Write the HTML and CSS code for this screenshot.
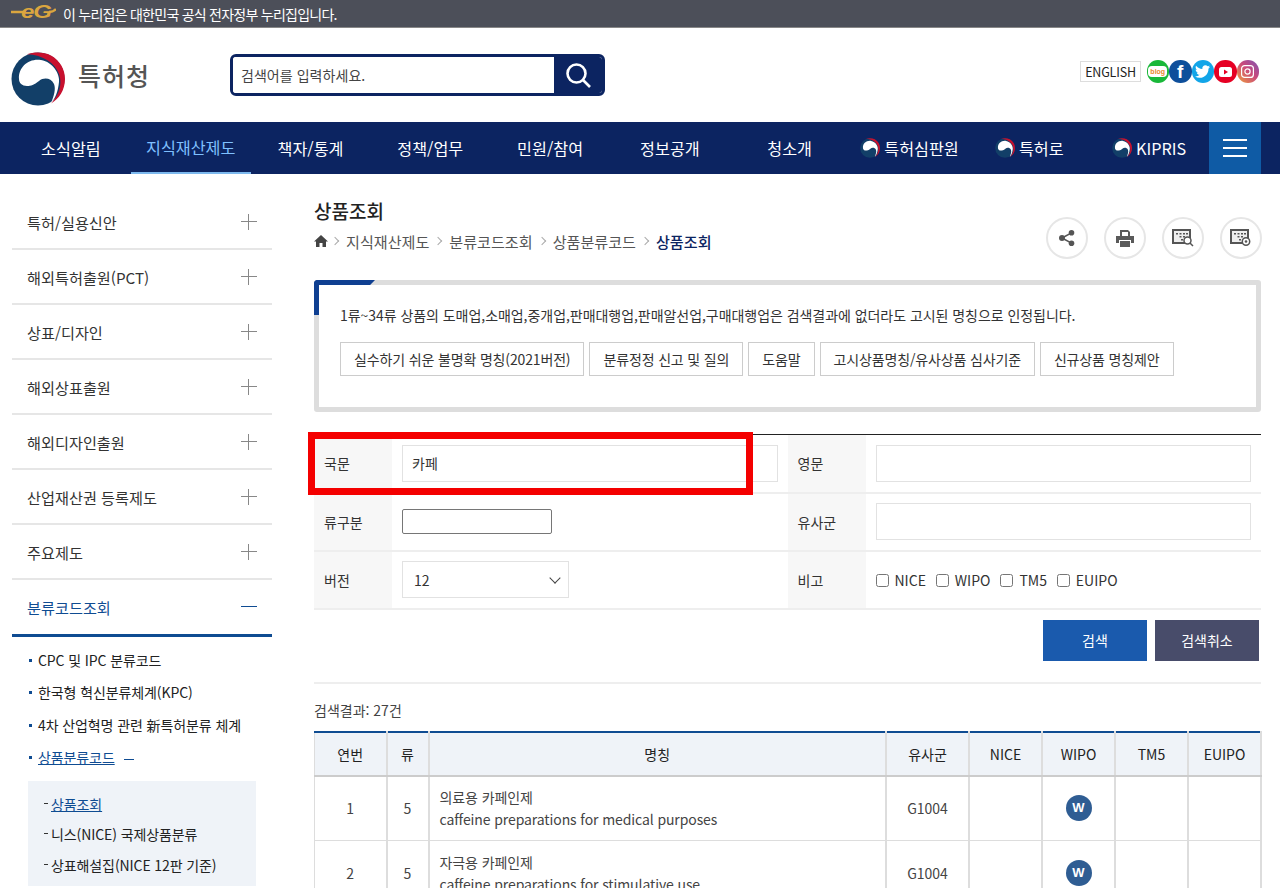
FILE: index.html
```html
<!DOCTYPE html>
<html lang="ko">

<head>
  <meta charset="utf-8">
  <title>상품조회 - 특허청</title>
  <link rel="stylesheet" href="styles.css">
</head>

<body>
  <svg class="defs" width="0" height="0">
    <symbol id="taegeuk" viewBox="0 0 54 54">
      <circle cx="27" cy="27" r="26.500" fill="#123f68" />
      <path fill="#c8102e" d="M16 2.300C23 0 32-.5 40 3.500c9 5 14 14 14 23.500 0 11-6 20-14 24.500 7-7 12-18 8-29.500C44 11 32 3 16 2.300z" />
      <path fill="#fff" d="M8 27C7 15 18 6 30 8c12 2 19 14 18 22-1 10-4 17-8 21 3-7 5-14 3-19-3-6-10-7-15-3-5 4-8 5-12 5-5 0-8-3-8-7z" />
    </symbol>
  </svg>

  <div class="gov-bar">
    <svg class="eg-logo" width="45" height="26" viewBox="0 0 45 26">
      <path d="M0 11h14M38 11c3 0 5-.5 7-3" fill="none" stroke="#dba63f" stroke-width="2.500" />
      <text x="10" y="17" textLength="30" lengthAdjust="spacingAndGlyphs" class="eg-text">eG</text>
    </svg>
    <span>이 누리집은 대한민국 공식 전자정부 누리집입니다.</span>
  </div>

  <header class="site-header">
    <a class="logo">
      <svg width="54" height="54"><use href="#taegeuk" /></svg>
      <span class="logo-name">특허청</span>
    </a>
    <form class="search-box">
      <input class="search-input" type="text" placeholder="검색어를 입력하세요.">
      <button class="search-btn" type="button">
        <svg width="28" height="28" viewBox="0 0 28 28" fill="none" stroke="#fff" stroke-width="2.600">
          <circle cx="12.500" cy="12.500" r="9" />
          <path d="M19 19l7 7" />
        </svg>
      </button>
    </form>
    <div class="header-links">
      <a class="lang-btn">ENGLISH</a>
      <a class="sns sns-blog"><span>blog</span></a>
      <a class="sns sns-fb">f</a>
      <a class="sns sns-tw">
        <svg width="15" height="13" viewBox="0 0 24 20" fill="#fff">
          <path d="M24 2.400c-.9.400-1.800.700-2.800.800 1-.6 1.800-1.600 2.200-2.700-1 .6-2 1-3.100 1.200C19.300.7 18 0 16.600 0c-3.200 0-5.500 3-4.800 6C7.700 5.800 4.100 3.900 1.700.9.400 3.100 1 6 3.200 7.500c-.8 0-1.600-.2-2.200-.6 0 2.300 1.600 4.400 3.900 4.900-.7.200-1.500.2-2.200.1.600 2 2.400 3.400 4.600 3.400C5.200 17.500 2.600 18.200 0 17.900 2.200 19.300 4.800 20 7.500 20c9.100 0 14.300-7.700 14-14.600 1-.7 1.800-1.600 2.500-3z" />
        </svg>
      </a>
      <a class="sns sns-yt">
        <svg width="13" height="10" viewBox="0 0 13 10">
          <rect width="13" height="10" rx="2.500" fill="#fff" />
          <path d="M5 2.500v5l4-2.500z" fill="#e60023" />
        </svg>
      </a>
      <a class="sns sns-ig">
        <svg width="13" height="13" viewBox="0 0 13 13" fill="none" stroke="#fff" stroke-width="1.200">
          <rect x=".6" y=".6" width="11.800" height="11.800" rx="3" />
          <circle cx="6.500" cy="6.500" r="2.600" />
        </svg>
      </a>
    </div>
  </header>

  <nav class="gnb">
    <a class="gnb-item">소식알림</a>
    <a class="gnb-item is-active">지식재산제도</a>
    <a class="gnb-item">책자/통계</a>
    <a class="gnb-item">정책/업무</a>
    <a class="gnb-item">민원/참여</a>
    <a class="gnb-item">정보공개</a>
    <a class="gnb-item">청소개</a>
    <a class="gnb-item"><svg width="20" height="20"><use href="#taegeuk" /></svg>특허심판원</a>
    <a class="gnb-item"><svg width="20" height="20"><use href="#taegeuk" /></svg>특허로</a>
    <a class="gnb-item"><svg width="20" height="20"><use href="#taegeuk" /></svg>KIPRIS</a>
    <a class="gnb-menu"><i></i><i></i><i></i></a>
  </nav>

  <div class="page">
    <aside class="lnb">
      <a class="lnb-item">특허/실용신안<i class="plus"></i></a>
      <a class="lnb-item">해외특허출원(PCT)<i class="plus"></i></a>
      <a class="lnb-item">상표/디자인<i class="plus"></i></a>
      <a class="lnb-item">해외상표출원<i class="plus"></i></a>
      <a class="lnb-item">해외디자인출원<i class="plus"></i></a>
      <a class="lnb-item">산업재산권 등록제도<i class="plus"></i></a>
      <a class="lnb-item">주요제도<i class="plus"></i></a>
      <a class="lnb-item is-open">분류코드조회<i class="minus"></i></a>
      <ul class="lnb-sub">
        <li>CPC 및 IPC 분류코드</li>
        <li>한국형 혁신분류체계(KPC)</li>
        <li>4차 산업혁명 관련 新특허분류 체계</li>
        <li class="is-current"><u>상품분류코드</u><i class="dash"></i></li>
      </ul>
      <ul class="lnb-sub2">
        <li class="is-current"><u>상품조회</u></li>
        <li>니스(NICE) 국제상품분류</li>
        <li>상표해설집(NICE 12판 기준)</li>
      </ul>
    </aside>

    <main class="content">
      <div class="page-head">
        <div>
          <h1 class="page-title">상품조회</h1>
          <div class="crumbs">
            <svg class="home" width="14" height="12" viewBox="0 0 14 12" fill="#444">
              <path d="M7 0L0 6.500h2V12h3.500V8h3v4H12V6.500h2z" />
            </svg>
            <span class="sep"></span><span>지식재산제도</span>
            <span class="sep"></span><span>분류코드조회</span>
            <span class="sep"></span><span>상품분류코드</span>
            <span class="sep"></span><strong>상품조회</strong>
          </div>
        </div>
        <div class="tools">
          <a class="tool">
            <svg width="16" height="16" viewBox="0 0 16 16" fill="#555">
              <circle cx="3" cy="8" r="3" />
              <circle cx="12.500" cy="2.800" r="2.800" />
              <circle cx="12.500" cy="13.200" r="2.800" />
              <path d="M3 8l9.500-5.200M3 8l9.500 5.200" stroke="#555" stroke-width="1.500" />
            </svg>
          </a>
          <a class="tool">
            <svg width="18" height="17" viewBox="0 0 18 17" fill="#5a5a5a">
              <path d="M4 0h8l2 2v4h-2V2H6v4H4z" />
              <path d="M0 6h18v7h-3v-3H3v3H0z" />
              <path d="M4 11h10v6H4z" />
            </svg>
          </a>
          <a class="tool">
            <svg width="22" height="18" viewBox="0 0 22 18">
              <rect x="1" y="1" width="17" height="13" fill="#eee" stroke="#555" stroke-width="2" />
              <path d="M4 4h2v1.500H4zM7.500 4h2v1.500h-2zM11 4h2v1.500h-2zM14 4h2v1.500h-2zM7.500 7h2v1.500h-2zM11 7h2v1.500h-2zM9 10h2v1.500H9z" fill="#555" />
              <circle cx="15.500" cy="11.500" r="3.500" fill="#fff" stroke="#555" stroke-width="1.500" />
              <path d="M18 14l3 3" stroke="#555" stroke-width="1.500" />
            </svg>
          </a>
          <a class="tool">
            <svg width="22" height="18" viewBox="0 0 22 18">
              <rect x="1" y="1" width="17" height="13" fill="#eee" stroke="#555" stroke-width="2" />
              <path d="M4 4h2v1.500H4zM7.500 4h2v1.500h-2zM11 4h2v1.500h-2zM14 4h2v1.500h-2zM7.500 7h2v1.500h-2zM11 7h2v1.500h-2zM9 10h2v1.500H9z" fill="#555" />
              <circle cx="16" cy="12.500" r="3.700" fill="#fff" stroke="#555" stroke-width="1.500" />
              <circle cx="16" cy="12.500" r="1.300" fill="#555" />
            </svg>
          </a>
        </div>
      </div>

      <section class="notice">
        <p class="notice-text">1류~34류 상품의 도매업,소매업,중개업,판매대행업,판매알선업,구매대행업은 검색결과에 없더라도 고시된 명칭으로 인정됩니다.</p>
        <div class="notice-links">
          <a class="link-btn">실수하기 쉬운 불명확 명칭(2021버전)</a>
          <a class="link-btn">분류정정 신고 및 질의</a>
          <a class="link-btn">도움말</a>
          <a class="link-btn">고시상품명칭/유사상품 심사기준</a>
          <a class="link-btn">신규상품 명칭제안</a>
        </div>
      </section>

      <div class="search-form">
        <table class="form-table">
          <tr>
            <th>국문</th>
            <td><input class="field" type="text" value="카페"></td>
            <th>영문</th>
            <td><input class="field" type="text"></td>
          </tr>
          <tr>
            <th>류구분</th>
            <td><input class="field-small" type="text"></td>
            <th>유사군</th>
            <td><input class="field" type="text"></td>
          </tr>
          <tr>
            <th>버전</th>
            <td>
              <div class="select-wrap">
                <select class="select">
                  <option>12</option>
                </select>
              </div>
            </td>
            <th>비고</th>
            <td class="checks">
              <label><input type="checkbox">NICE</label>
              <label><input type="checkbox">WIPO</label>
              <label><input type="checkbox">TM5</label>
              <label><input type="checkbox">EUIPO</label>
            </td>
          </tr>
        </table>
        <div class="highlight"></div>
      </div>

      <div class="form-actions">
        <button class="btn btn-search" type="button">검색</button>
        <button class="btn btn-cancel" type="button">검색취소</button>
      </div>

      <p class="result-count">검색결과: 27건</p>

      <table class="result-table">
        <colgroup>
          <col class="c-no">
          <col class="c-class">
          <col>
          <col class="c-group">
          <col class="c-flag">
          <col class="c-flag">
          <col class="c-flag">
          <col class="c-flag">
        </colgroup>
        <thead>
          <tr>
            <th>연번</th>
            <th>류</th>
            <th>명칭</th>
            <th>유사군</th>
            <th>NICE</th>
            <th>WIPO</th>
            <th>TM5</th>
            <th>EUIPO</th>
          </tr>
        </thead>
        <tbody>
          <tr>
            <td>1</td>
            <td>5</td>
            <td class="name">의료용 카페인제<br>caffeine preparations for medical purposes</td>
            <td>G1004</td>
            <td></td>
            <td><span class="badge">W</span></td>
            <td></td>
            <td></td>
          </tr>
          <tr>
            <td>2</td>
            <td>5</td>
            <td class="name">자극용 카페인제<br>caffeine preparations for stimulative use</td>
            <td>G1004</td>
            <td></td>
            <td><span class="badge">W</span></td>
            <td></td>
            <td></td>
          </tr>
        </tbody>
      </table>
    </main>
  </div>
</body>

</html>
```

FILE: styles.css
```css
* {
  box-sizing: border-box;
}

html,
body {
  margin: 0;
  height: 888px;
  overflow: hidden;
}

body {
  background: #fff;
  color: #333;
  font-family: "Noto Sans CJK KR", "Noto Sans", sans-serif;
  font-size: 14px;
}

.defs {
  position: absolute;
}

/* top strip */
.gov-bar {
  display: flex;
  align-items: center;
  gap: 7px;
  height: 28px;
  padding-left: 11px;
  background: #4c4f59;
  border-bottom: 1px solid #888;
  color: #fff;
  font-size: 14px;
  letter-spacing: -0.75px;
}

.eg-text {
  fill: #dba63f;
  font-family: "Liberation Sans", sans-serif;
  font-size: 18px;
  font-style: italic;
  font-weight: 700;
}

/* header */
.site-header {
  display: flex;
  align-items: center;
  height: 94px;
  padding: 0 21px 0 11px;
}

.logo {
  display: flex;
  align-items: center;
  gap: 13px;
  width: 219px;
  margin-top: 7px;
}

.logo-name {
  margin-top: -7px;
  color: #555;
  font-size: 25px;
  font-weight: 500;
  letter-spacing: 1px;
}

.search-box {
  display: flex;
  width: 375px;
  height: 42px;
  border: 3px solid #0c2461;
  border-radius: 6px;
  overflow: hidden;
}

.search-input {
  flex: 1;
  min-width: 0;
  padding: 0 8px;
  border: 0;
  outline: 0;
  font: inherit;
  letter-spacing: 0.05px;
}

.search-input::placeholder {
  color: #444;
  opacity: 1;
}

.search-btn {
  display: flex;
  align-items: center;
  justify-content: center;
  width: 48px;
  padding: 0;
  border: 0;
  background: #0c2461;
}

.header-links {
  display: flex;
  align-items: center;
  margin: -7px 0 0 auto;
}

.lang-btn {
  width: 61px;
  height: 21px;
  margin-right: 5.500px;
  border: 1px solid #ddd;
  color: #222;
  font-size: 12.500px;
  line-height: 19px;
  letter-spacing: -0.2px;
  text-align: center;
}

.sns {
  display: flex;
  align-items: center;
  justify-content: center;
  width: 22.500px;
  height: 22.500px;
  border-radius: 50%;
  color: #fff;
  font-family: "Liberation Sans", sans-serif;
  font-weight: 700;
}

.sns-blog {
  background: #19b839;
}

.sns-blog span {
  padding: 1px 2px;
  border-radius: 4px;
  background: #fff;
  color: #e9892d;
  font-size: 7px;
  line-height: 9px;
}

.sns-fb {
  background: #0e4f9b;
  font-size: 19px;
}

.sns-tw {
  background: #12a5e8;
}

.sns-yt {
  background: #e60023;
}

.sns-ig {
  background: linear-gradient(45deg, #f0a03c, #c9487c 55%, #7a55b5);
}

/* main menu */
.gnb {
  display: flex;
  height: 52px;
  padding: 0 19px 0 11px;
  background: #0c2461;
}

.gnb-item {
  flex: 1;
  display: flex;
  align-items: center;
  justify-content: center;
  gap: 4px;
  color: #fff;
  font-size: 16.200px;
}

.gnb-item.is-active {
  border-bottom: 2px solid #7db9ee;
  color: #7fc0ff;
}

.gnb-menu {
  flex: none;
  display: flex;
  flex-direction: column;
  align-items: center;
  justify-content: center;
  gap: 6px;
  width: 52px;
  background: #0f5ba5;
}

.gnb-menu i {
  width: 24px;
  height: 2px;
  background: #fff;
}

.page {
  display: flex;
  align-items: flex-start;
  padding: 22px 19px 0 12px;
}

/* left menu */
.lnb {
  flex: none;
  width: 260px;
  margin: -1px 42px 0 0;
}

.lnb-item {
  display: flex;
  align-items: center;
  justify-content: space-between;
  height: 55px;
  padding: 0 15px 0 15px;
  border-bottom: 2px solid #e6e6e6;
  color: #333;
  font-size: 15.200px;
}

.lnb-item.is-open {
  height: 57px;
  border-bottom: 3px solid #0f4c92;
  color: #0f4c92;
}

.plus,
.minus {
  position: relative;
  width: 16px;
  height: 16px;
}

.plus::before,
.minus::before {
  content: "";
  position: absolute;
  left: 0;
  top: 7px;
  width: 16px;
  height: 1px;
  background: #888;
}

.plus::after {
  content: "";
  position: absolute;
  left: 7px;
  top: 0;
  width: 1px;
  height: 16px;
  background: #888;
}

.minus::before {
  background: #0f4c92;
}

.lnb-sub {
  margin: 0;
  padding: 7px 0 7px 26px;
  list-style: none;
  color: #222;
}

.lnb-sub li {
  position: relative;
  height: 32.400px;
  line-height: 32px;
  letter-spacing: -0.1px;
}

.lnb-sub li::before {
  content: "";
  position: absolute;
  left: -9px;
  top: 15px;
  width: 3px;
  height: 3px;
  background: #0f4c92;
}

.lnb-sub .is-current,
.lnb-sub2 .is-current {
  color: #0f4c92;
}

.dash {
  display: inline-block;
  width: 10px;
  height: 1px;
  margin-left: 9px;
  vertical-align: middle;
  background: #0f4c92;
}

.lnb-sub2 {
  width: 228px;
  margin: 0 0 0 16px;
  padding: 8px 0 6px 23px;
  list-style: none;
  background: #eff3f8;
  color: #222;
}

.lnb-sub2 li {
  position: relative;
  height: 30.500px;
  line-height: 30px;
  letter-spacing: -0.1px;
}

.lnb-sub2 li::before {
  content: "";
  position: absolute;
  left: -7px;
  top: 14px;
  width: 4px;
  height: 1px;
  background: #333;
}

/* content */
.content {
  flex: none;
  width: 947px;
}

.page-head {
  display: flex;
  justify-content: space-between;
}

.page-title {
  margin: 0;
  color: #222;
  font-size: 19px;
  font-weight: 500;
  line-height: 30px;
}

.crumbs {
  display: flex;
  align-items: center;
  gap: 6px;
  height: 24px;
  margin-top: 3px;
  color: #555;
  font-size: 15.100px;
}

.crumbs strong {
  color: #0c2461;
  font-weight: 500;
}

.home {
  margin-right: -2px;
}

.sep {
  width: 6px;
  height: 6px;
  margin: 0 2px 0 0;
  border-top: 1px solid #aaa;
  border-right: 1px solid #aaa;
  transform: rotate(45deg);
}

.tools {
  display: flex;
  gap: 16px;
  margin: 21px -1px 0 0;
}

.tool {
  display: flex;
  align-items: center;
  justify-content: center;
  width: 42px;
  height: 42px;
  border: 2px solid #e6e6e6;
  border-radius: 50%;
}

.notice {
  position: relative;
  height: 132px;
  margin-top: 21px;
  padding: 19px 21px;
  border: 5px solid #ddd;
  border-radius: 3px;
}

/* blue corner on the top left */
.notice::before {
  content: "";
  position: absolute;
  left: -5px;
  top: -5px;
  width: 56px;
  height: 30px;
  border-top: 5px solid #0f3f91;
  border-left: 5px solid #0f3f91;
  border-top-left-radius: 4px;
  clip-path: polygon(0 0, 100% 0, 92% 5px, 5px 5px, 5px 100%, 0 100%);
}

.notice-text {
  margin: 0 0 16px;
  color: #333;
  font-size: 14px;
  line-height: 22px;
  letter-spacing: -0.05px;
}

.notice-links {
  display: flex;
  gap: 5px;
}

.link-btn {
  height: 34px;
  padding: 0 13px;
  border: 1px solid #ccc;
  color: #333;
  font-size: 14px;
  line-height: 32px;
  letter-spacing: -0.15px;
}

/* search form */
.search-form {
  position: relative;
  margin-top: 22px;
}

.form-table {
  width: 100%;
  border-collapse: collapse;
  border-top: 1px solid #222;
  table-layout: fixed;
}

.form-table th {
  width: 78px;
  height: 58px;
  padding: 0 0 0 10px;
  border-bottom: 2px solid #eee;
  background: #f7f7f7;
  color: #333;
  font-size: 14px;
  font-weight: 400;
  text-align: left;
}

.form-table td {
  padding: 0 10px;
  border-bottom: 2px solid #eee;
}

.field {
  display: block;
  width: 100%;
  height: 37px;
  padding: 0 9px;
  border: 1px solid #e2e2e2;
  color: #333;
  font: inherit;
}

.field-small {
  display: block;
  width: 150px;
  height: 25px;
  border: 1px solid #767676;
  border-radius: 2px;
}

.select-wrap {
  position: relative;
  width: 167px;
}

.select-wrap::after {
  content: "";
  position: absolute;
  right: 10px;
  top: 13px;
  width: 7px;
  height: 7px;
  border-right: 1px solid #444;
  border-bottom: 1px solid #444;
  transform: rotate(45deg);
}

.select {
  display: block;
  width: 100%;
  height: 37px;
  padding: 0 11px;
  border: 1px solid #e2e2e2;
  background: #fff;
  color: #333;
  font: inherit;
  appearance: none;
}

.checks {
  font-size: 14px;
}

.checks label {
  margin-right: 6px;
}

.checks input {
  margin: 0 6px 0 0;
  vertical-align: -1px;
}

/* the red mark over the first row */
.highlight {
  position: absolute;
  left: -6px;
  top: -2px;
  width: 445px;
  height: 63px;
  border: 7px solid #f40000;
}

.form-actions {
  display: flex;
  justify-content: flex-end;
  gap: 8px;
  height: 74px;
  padding: 10px 2px 0 0;
  border-bottom: 2px solid #eee;
}

.btn {
  width: 104px;
  height: 41px;
  border: 0;
  color: #fff;
  font: inherit;
}

.btn-search {
  background: #1a5aad;
}

.btn-cancel {
  background: #484c6a;
}

.result-count {
  margin: 15px 0 10px;
  color: #444;
  font-size: 14px;
  line-height: 22px;
}

.result-table {
  width: calc(100% + 1px);
  border-collapse: collapse;
  border-top: 2px solid #0f4c92;
  border-left: 1px solid #ddd;
  border-right: 2px solid #ddd;
  table-layout: fixed;
}

.c-no {
  width: 72px;
}

.c-class {
  width: 42px;
}

.c-group {
  width: 83px;
}

.c-flag {
  width: 73px;
}

.result-table th {
  height: 44px;
  border-right: 2px solid #ddd;
  border-bottom: 2px solid #ccc;
  background: #eff3f8;
  color: #222;
  font-size: 14px;
  font-weight: 400;
}

.result-table td {
  height: 65px;
  padding: 0;
  border-right: 2px solid #ddd;
  border-bottom: 1px solid #ddd;
  color: #444;
  font-size: 14px;
  text-align: center;
}

.result-table .name {
  padding: 0 0 0 10px;
  line-height: 22px;
  letter-spacing: -0.1px;
  text-align: left;
}

.badge {
  display: inline-block;
  width: 26px;
  height: 26px;
  border-radius: 50%;
  background: #2f5d93;
  color: #fff;
  font-family: "Liberation Sans", sans-serif;
  font-size: 13px;
  font-weight: 700;
  line-height: 26px;
  vertical-align: middle;
}
```
